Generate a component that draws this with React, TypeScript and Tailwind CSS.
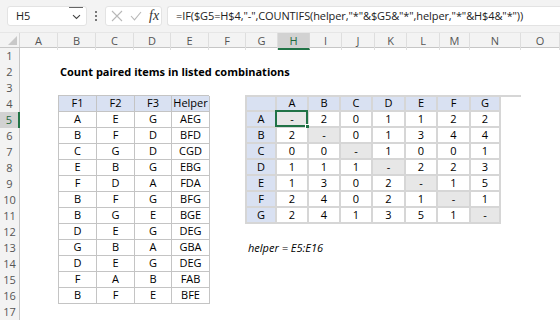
import React from "react";

const colLetters = ["A","B","C","D","E","F","G","H","I","J","K","L","M","N","O",""];
const colTemplate = "grid grid-cols-[38px_38px_38px_37px_38px_37px_32px_32px_32px_33px_32px_33px_30px_51px_1fr]";

const listData = [
  ["A","E","G","AEG"],
  ["B","F","D","BFD"],
  ["C","G","D","CGD"],
  ["E","B","G","EBG"],
  ["F","D","A","FDA"],
  ["B","F","G","BFG"],
  ["B","G","E","BGE"],
  ["D","E","G","DEG"],
  ["G","B","A","GBA"],
  ["D","E","G","DEG"],
  ["F","A","B","FAB"],
  ["B","F","E","BFE"],
];

const letters = ["A","B","C","D","E","F","G"];
const matrix = [
  ["-","2","0","1","1","2","2"],
  ["2","-","0","1","3","4","4"],
  ["0","0","-","1","0","0","1"],
  ["1","1","1","-","2","2","3"],
  ["1","3","0","2","-","1","5"],
  ["2","4","0","2","1","-","1"],
  ["2","4","1","3","5","1","-"],
];

const font = { fontFamily: '"Open Sans", "Noto Sans", Arial, sans-serif' };

export default function App() {
  return (
    <div className="w-[560px] h-[320px] overflow-hidden bg-white text-black" style={font}>
      {/* Formula bar */}
      <div className="h-[32px] bg-[#f3f3f3] flex items-center pl-[7px] gap-0">
        <div className="w-[80px] h-[20px] bg-white rounded-[3px] border border-[#e3e3e3] flex items-center justify-between pl-[8px] pr-[3px] text-[11px] text-[#222]">
          <span>H5</span>
          <div className="h-[19px] w-[14px] border-t border-[#666] flex items-center justify-center">
            <svg width="9" height="6" viewBox="0 0 9 6"><path d="M1 1.2 L4.5 4.5 L8 1.2" fill="none" stroke="#444" strokeWidth="1.1"/></svg>
          </div>
        </div>
        <div className="w-[18px] flex flex-col items-center gap-[2px]">
          <div className="w-[2px] h-[2px] bg-[#777]" />
          <div className="w-[2px] h-[2px] bg-[#777]" />
          <div className="w-[2px] h-[2px] bg-[#777]" />
        </div>
        <div className="w-[57px] h-[20px] bg-white rounded-[3px] border border-[#e3e3e3] flex items-center pl-[5px] gap-[7px]">
          <svg width="12" height="12" viewBox="0 0 12 12"><path d="M1 1 L11 11 M11 1 L1 11" stroke="#b8b8b8" strokeWidth="1.1"/></svg>
          <svg width="12" height="10" viewBox="0 0 12 10"><path d="M1 5 L4.5 8.8 L11 1" fill="none" stroke="#b8b8b8" strokeWidth="1.1"/></svg>
          <span className="text-[14px] italic text-[#333] leading-none" style={{ fontFamily: '"Liberation Serif", "DejaVu Serif", serif' }}>fx</span>
        </div>
        <div className="ml-[5px] flex-1 h-[20px] bg-white rounded-l-[3px] border border-r-0 border-[#e3e3e3] flex items-center pl-[8px] text-[11px] tracking-[-0.1px] text-[#222] whitespace-nowrap">
          =IF($G5=H$4,"-",COUNTIFS(helper,"*"&amp;$G5&amp;"*",helper,"*"&amp;H$4&amp;"*"))
        </div>
      </div>

      {/* Column headers */}
      <div className="flex h-[16px] bg-[#f3f3f3] border-b border-[#c6c6c6] border-t border-t-[#e6e6e6]">
        <div className="w-[20px] shrink-0 border-r border-[#d6d6d6] flex items-end justify-end pr-[2px] pb-[2px]">
          <svg width="9" height="9" viewBox="0 0 9 9"><path d="M9 0 L9 9 L0 9 Z" fill="#c8c8c8"/></svg>
        </div>
        <div className={`${colTemplate} flex-1 text-[11px] text-[#555] leading-[15px]`}>
          {colLetters.map((l, i) => (
            <div
              key={i}
              className={
                l === "H"
                  ? "text-center bg-[#d2d2d2] text-[#1e6b3f] border-b-2 border-[#217346] border-r border-r-[#d6d6d6]"
                  : "text-center border-r border-[#dedede]"
              }
            >
              {l}
            </div>
          ))}
        </div>
      </div>

      {/* Body */}
      <div className="flex">
        <div className="w-[20px] shrink-0 bg-[#f3f3f3] border-r border-[#c6c6c6] flex flex-col text-[11px] text-[#555]">
          {Array.from({ length: 17 }, (_, i) => i + 1).map((n) => (
            <div
              key={n}
              className={
                n === 5
                  ? "h-[16px] flex items-center justify-center bg-[#d2d2d2] text-[#1e6b3f] border-r-2 border-[#217346] -mr-px"
                  : "h-[16px] flex items-center justify-center"
              }
            >
              {n}
            </div>
          ))}
        </div>

        <div className={`${colTemplate} grid-rows-[repeat(17,16px)] flex-1 text-[11px]`}>
          {/* Title */}
          <div className="col-start-2 col-span-7 row-start-2 font-bold text-[11px] leading-[16px] whitespace-nowrap pl-[2px]">
            Count paired items in listed combinations
          </div>

          {/* List table */}
          <div className="col-start-2 col-span-4 row-start-4 row-span-13 self-start">
            <div className="grid grid-cols-[38px_38px_37px_38px] border-l border-t border-[#c4c4c4] -mt-px">
              {["F1","F2","F3","Helper"].map((h) => (
                <div key={h} className="h-[16px] bg-[#d9e1f2] border-r border-b border-[#c4c4c4] flex items-center justify-center">
                  {h}
                </div>
              ))}
              {listData.map((row, r) =>
                row.map((c, ci) => (
                  <div key={`${r}-${ci}`} className="h-[16px] bg-white border-r border-b border-[#c4c4c4] flex items-center justify-center">
                    {c}
                  </div>
                ))
              )}
            </div>
          </div>

          {/* Matrix */}
          <div className="col-start-7 col-span-8 row-start-4 row-span-8 self-start">
            <div className="grid grid-cols-[30px_32px_32px_32px_33px_32px_33px_30px] border-l-2 border-t-2 border-[#d6d6d6] -mt-px -ml-px">
              <div className="h-[15px] bg-[#d9e1f2] border-r-2 border-b-2 border-[#d6d6d6]" />
              {letters.map((l) => (
                <div key={l} className="h-[15px] bg-[#d9e1f2] border-r-2 border-b-2 border-[#d6d6d6] flex items-center justify-center">
                  {l}
                </div>
              ))}
              {matrix.map((row, r) => (
                <React.Fragment key={r}>
                  <div className="h-[16px] bg-[#d9e1f2] border-r-2 border-b-2 border-[#d6d6d6] flex items-center justify-center">
                    {letters[r]}
                  </div>
                  {row.map((v, c) => {
                    const diag = r === c;
                    const selected = r === 0 && c === 0;
                    return (
                      <div
                        key={c}
                        className={
                          diag
                            ? "relative h-[16px] bg-[#e7e7e7] border-r-2 border-b-2 border-[#d6d6d6] flex items-center justify-center"
                            : "relative h-[16px] bg-white border-r-2 border-b-2 border-[#d6d6d6] flex items-center justify-center"
                        }
                      >
                        {v}
                        {selected && (
                          <>
                            <div className="absolute -left-[2px] -top-[2px] -right-[1px] -bottom-[1px] border-2 border-[#217346]" />
                            <div className="absolute -right-[3px] -bottom-[3px] w-[5px] h-[5px] bg-[#217346] border border-white" />
                          </>
                        )}
                      </div>
                    );
                  })}
                </React.Fragment>
              ))}
            </div>
          </div>

          {/* Named range note */}
          <div className="col-start-7 col-span-4 row-start-13 italic leading-[16px] whitespace-nowrap pl-[2px]">
            helper = E5:E16
          </div>
        </div>
      </div>
    </div>
  );
}
